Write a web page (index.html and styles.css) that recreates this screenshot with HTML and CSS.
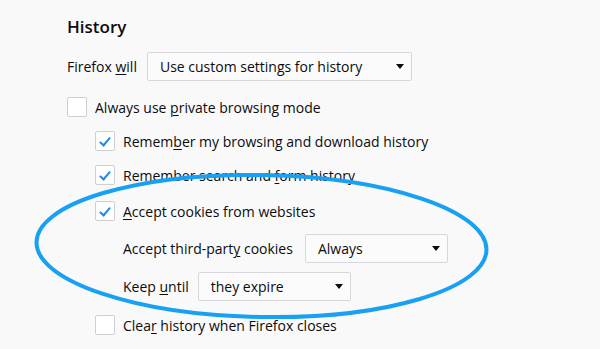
FILE: index.html
```html
<!DOCTYPE html>
<html lang="en">
<head>
    <meta charset="UTF-8">
    <title>History</title>
    <link rel="stylesheet" href="styles.css">
</head>
<body>
    <div class="panel">
        <h2>History</h2>
        <div class="row will">
            <span>Firefox <u>w</u>ill</span>
            <div class="select wide">Use custom settings for history<span class="arrow"></span></div>
        </div>
        <label class="row private"><span class="box"></span><span>Always use <u>p</u>rivate browsing mode</span></label>
        <div class="nested">
            <label class="row first"><span class="box on"></span><span>Remem<u>b</u>er my browsing and download history</span></label>
            <label class="row"><span class="box on"></span><span>Remember search and <u>f</u>orm history</span></label>
            <label class="row cookies"><span class="box on"></span><span><u>A</u>ccept cookies from websites</span></label>
            <div class="sub">
                <div class="row third">
                    <span>Accept third-part<u>y</u> cookies</span>
                    <div class="select mid">Always<span class="arrow"></span></div>
                </div>
                <div class="row keep">
                    <span>Keep <u>u</u>ntil</span>
                    <div class="select short">they expire<span class="arrow"></span></div>
                </div>
            </div>
            <label class="row clear"><span class="box"></span><span>Clea<u>r</u> history when Firefox closes</span></label>
        </div>
    </div>

    <svg class="circle" width="600" height="349" viewBox="0 0 600 349">
        <ellipse cx="261.5" cy="246" rx="225" ry="71" transform="rotate(1 261.5 246)" />
    </svg>
</body>
</html>
```

FILE: styles.css
```css
* {
    margin: 0;
    padding: 0;
    box-sizing: border-box;
}

body {
    background: #f9f9fa;
    color: #0c0c0d;
    font-family: 'Open Sans', 'Noto Sans', sans-serif;
    font-size: 14px;
    width: 600px;
    height: 349px;
    overflow: hidden;
}

.panel {
    padding: 14px 0 0 67px;
}

h2 {
    font-size: 17px;
    font-weight: 600;
    line-height: 26px;
    height: 26px;
}

u {
    text-decoration-thickness: 1px;
    text-underline-offset: 2px;
}

.row {
    display: flex;
    align-items: center;
    min-height: 20px;
    margin-top: 14px;
}

.will {
    margin-top: 12px;
}

.private {
    margin-top: 16px;
}

.nested {
    padding-left: 28px;
}

.cookies {
    margin-top: 16px;
}

.sub {
    padding-left: 28px;
}

.third {
    margin-top: 13px;
}

.keep {
    margin-top: 9px;
}

.clear {
    margin-top: 14px;
}

.box {
    width: 20px;
    height: 20px;
    flex: none;
    border: 1px solid #cfcfd3;
    border-radius: 2px;
    background: #fff;
    margin-right: 8px;
    position: relative;
}

.box.on::after {
    content: "";
    position: absolute;
    left: 6px;
    top: 3px;
    width: 4px;
    height: 9px;
    border: solid #1f8be8;
    border-width: 0 2px 2px 0;
    transform: rotate(40deg);
}

.select {
    position: relative;
    height: 29px;
    line-height: 27px;
    margin-left: 10px;
    padding-left: 12px;
    border: 1px solid #d7d7db;
    border-radius: 2px;
    background: #fbfbfc;
}

.wide {
    width: 265px;
}

.mid {
    width: 143px;
    margin-left: 12px;
}

.short {
    width: 153px;
    margin-left: 9px;
}

.arrow {
    position: absolute;
    right: 7px;
    top: 11px;
    width: 0;
    height: 0;
    border-left: 4px solid transparent;
    border-right: 4px solid transparent;
    border-top: 5px solid #0c0c0d;
}

.circle {
    position: absolute;
    left: 0;
    top: 0;
    pointer-events: none;
}

.circle ellipse {
    fill: none;
    stroke: #18a0f2;
    stroke-width: 4;
}
```
